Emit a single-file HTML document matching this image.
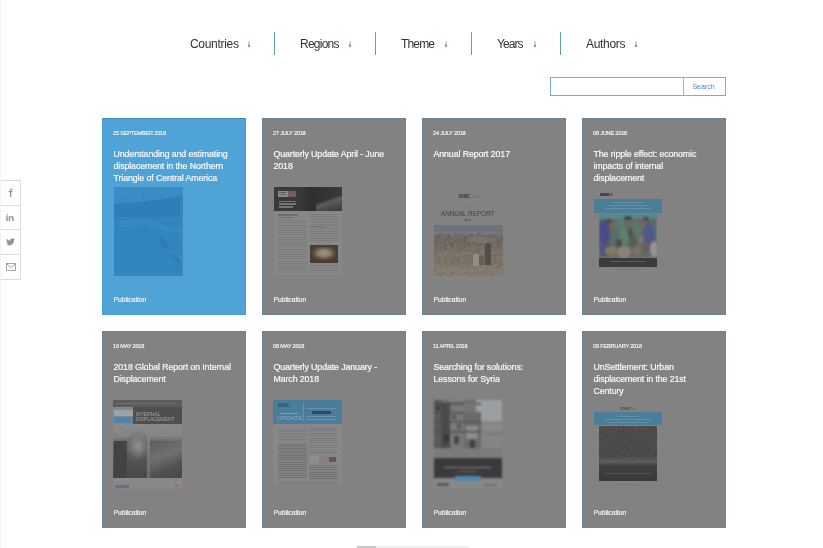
<!DOCTYPE html>
<html><head><meta charset="utf-8"><style>
*{margin:0;padding:0;box-sizing:border-box}
html,body{width:823px;height:548px;overflow:hidden;background:#fff}
body{position:relative;font-family:"Liberation Sans",sans-serif}
.nav{position:absolute;top:37px;font-size:12px;color:#333;line-height:14px;white-space:nowrap;will-change:transform}
.arr{position:absolute;top:41.2px;width:4px;height:7px}
.dv{position:absolute;top:32px;width:1px;height:23px;background:linear-gradient(180deg,#5aa9b4,#62a0b0 60%,#6a90a0)}
.search{position:absolute;left:550px;top:77px;width:176px;height:19px;border:1px solid #72b3c9}
.search .btn{position:absolute;left:132px;top:0;width:43px;height:17px;border-left:1px solid #8cc0d2;color:#3f8cc4;font-size:7px;line-height:17px;text-align:center;padding-right:3px;will-change:transform}
.social{position:absolute;left:0;top:180px;width:21px;height:100px;border:1px solid #dcdcdc;border-left:none}
.social>div{position:absolute;left:0;width:20px;border-bottom:1px solid #dcdcdc}
.social svg{position:absolute}
.card{position:absolute;width:144px;height:197px;background:#828282;box-shadow:inset 0 0 0 1px #67869a,inset 0 0 0 2px #7b8589;overflow:hidden;will-change:transform}
.card.blue{background:#4fa3d6;box-shadow:inset 0 1px 0 0 #3d8bbd,inset 0 0 0 1px #48a2cc}
.date{position:absolute;left:11px;top:11.5px;font-size:5.6px;color:#f4f4f4;letter-spacing:-0.2px;white-space:nowrap;-webkit-text-stroke:0.15px #f4f4f4}
.title{position:absolute;left:11.5px;top:29.5px;width:140px;white-space:nowrap;font-size:8.8px;line-height:12.3px;color:#fafafa;letter-spacing:-0.1px;-webkit-text-stroke:0.2px #fafafa}
.pub{position:absolute;left:11.5px;top:177.5px;font-size:6.8px;color:#f6f6f6;letter-spacing:-0.05px;-webkit-text-stroke:0.15px #f6f6f6}
.im{position:absolute}
.g{position:absolute;left:0;top:0;width:823px;height:548px;filter:blur(0.7px)}
</style></head><body>
<div class="nav" style="left:189.5px;letter-spacing:-0.3px">Countries</div><svg class="arr" style="left:246.5px" viewBox="0 0 4 7"><path d="M2 0.5V5" stroke="#4a8fc0" stroke-width="0.8"/><path d="M0.6 4.2L2 6.6L3.4 4.2Z" fill="#3b82b8"/></svg><div class="dv" style="left:274px"></div><div class="nav" style="left:299.5px;letter-spacing:-0.75px">Regions</div><svg class="arr" style="left:347.5px" viewBox="0 0 4 7"><path d="M2 0.5V5" stroke="#4a8fc0" stroke-width="0.8"/><path d="M0.6 4.2L2 6.6L3.4 4.2Z" fill="#3b82b8"/></svg><div class="dv" style="left:375px"></div><div class="nav" style="left:401px;letter-spacing:-0.85px">Theme</div><svg class="arr" style="left:444px" viewBox="0 0 4 7"><path d="M2 0.5V5" stroke="#4a8fc0" stroke-width="0.8"/><path d="M0.6 4.2L2 6.6L3.4 4.2Z" fill="#3b82b8"/></svg><div class="dv" style="left:471px"></div><div class="nav" style="left:497px;letter-spacing:-0.95px">Years</div><svg class="arr" style="left:532.5px" viewBox="0 0 4 7"><path d="M2 0.5V5" stroke="#4a8fc0" stroke-width="0.8"/><path d="M0.6 4.2L2 6.6L3.4 4.2Z" fill="#3b82b8"/></svg><div class="dv" style="left:560px"></div><div class="nav" style="left:585.5px;letter-spacing:-0.3px">Authors</div><svg class="arr" style="left:633.5px" viewBox="0 0 4 7"><path d="M2 0.5V5" stroke="#4a8fc0" stroke-width="0.8"/><path d="M0.6 4.2L2 6.6L3.4 4.2Z" fill="#3b82b8"/></svg>
<div class="search"><div class="btn">Search</div></div>
<div class="social"><div style="top:24px"></div><div style="top:48px"></div><div style="top:73px"></div></div><svg class="im" style="left:7px;top:188px" width="7" height="9" viewBox="0 0 7 9"><path d="M3 9V4.2H1.6V3H3V2C3 0.9 3.6 0.4 4.6 0.4H5.6V1.5H4.9C4.4 1.5 4.2 1.7 4.2 2.1V3H5.6L5.4 4.2H4.2V9Z" fill="#929292"/></svg><svg class="im" style="left:6.3px;top:213.6px" width="8.2" height="7.3" viewBox="0 0 9 8"><rect x="0.3" y="2.4" width="1.6" height="5.4" fill="#929292"/><circle cx="1.1" cy="0.9" r="0.9" fill="#929292"/><path d="M3 2.4H4.5V3.2C4.9 2.6 5.5 2.2 6.3 2.2C7.7 2.2 8.4 3 8.4 4.6V7.8H6.8V4.9C6.8 4.1 6.5 3.6 5.8 3.6C5.1 3.6 4.6 4.1 4.6 4.9V7.8H3Z" fill="#929292"/></svg><svg class="im" style="left:6px;top:238px" width="9" height="8" viewBox="0 0 24 20"><path d="M24 2.4c-.9.4-1.8.6-2.8.8 1-.6 1.8-1.6 2.2-2.7-1 .6-2 1-3.1 1.2C19.4.7 18.1.1 16.6.1c-2.7 0-4.9 2.2-4.9 4.9 0 .4 0 .8.1 1.1C7.7 5.9 4.1 4 1.7 1 1.2 1.7 1 2.6 1 3.5c0 1.7.9 3.2 2.2 4.1-.8 0-1.6-.2-2.2-.6v.1c0 2.4 1.7 4.4 3.9 4.8-.4.1-.8.2-1.3.2-.3 0-.6 0-.9-.1.6 2 2.4 3.4 4.6 3.4-1.7 1.3-3.8 2.1-6.1 2.1-.4 0-.8 0-1.2-.1 2.2 1.4 4.8 2.2 7.5 2.2 9.1 0 14-7.5 14-14v-.6c1-.7 1.8-1.6 2.5-2.6z" fill="#929292"/></svg><svg class="im" style="left:5.5px;top:262.5px" width="10" height="8" viewBox="0 0 10 8"><rect x="0.5" y="0.5" width="9" height="7" fill="none" stroke="#929292" stroke-width="0.8"/><path d="M0.7 0.8L5 4.6L9.3 0.8" fill="none" stroke="#929292" stroke-width="0.8"/></svg>
<div class="card blue" style="left:102px;top:118px"><div class="date">25 SEPTEMBER 2018</div><div class="title">Understanding and estimating<br>displacement in the Northern<br>Triangle of Central America</div><div class="pub">Publication</div></div><div class="card" style="left:262px;top:118px"><div class="date">27 JULY 2018</div><div class="title">Quarterly Update April - June<br>2018</div><div class="pub">Publication</div></div><div class="card" style="left:422px;top:118px"><div class="date">24 JULY 2018</div><div class="title">Annual Report 2017</div><div class="pub">Publication</div></div><div class="card" style="left:582px;top:118px"><div class="date">08 JUNE 2018</div><div class="title">The ripple effect: economic<br>impacts of internal<br>displacement</div><div class="pub">Publication</div></div><div class="card" style="left:102px;top:331px"><div class="date">16 MAY 2018</div><div class="title">2018 Global Report on Internal<br>Displacement</div><div class="pub">Publication</div></div><div class="card" style="left:262px;top:331px"><div class="date">08 MAY 2018</div><div class="title">Quarterly Update January -<br>March 2018</div><div class="pub">Publication</div></div><div class="card" style="left:422px;top:331px"><div class="date">11 APRIL 2018</div><div class="title">Searching for solutions:<br>Lessons for Syria</div><div class="pub">Publication</div></div><div class="card" style="left:582px;top:331px"><div class="date">09 FEBRUARY 2018</div><div class="title">UnSettlement: Urban<br>displacement in the 21st<br>Century</div><div class="pub">Publication</div></div>
<div class="g"><svg class="im" style="left:113.5px;top:187px" width="69" height="89" viewBox="0 0 69 89"><rect width="69" height="89" fill="#3184bc"/><path d="M0 0H69V8C55 11 35 15 0 17Z" fill="#3a8cc4"/><path d="M0 17C35 15 55 11 69 8V30H0Z" fill="#2e7fb7"/><path d="M4 34L30 31L48 37L60 41L69 40V46L50 44L30 38L5 41Z" fill="#3a8cc4" opacity=".6"/><path d="M46 48L69 76V82L44 54Z" fill="#2a78ae" opacity=".6"/><path d="M52 60L69 70V74L50 64Z" fill="#3d90c6" opacity=".5"/><rect x="10" y="9" width="3" height="8" fill="#2e7fb7" opacity=".5"/><rect x="28" y="8" width="3" height="8" fill="#2e7fb7" opacity=".5"/><rect x="66" y="0" width="3" height="89" fill="#3a8bc2" opacity=".6"/><rect x="0" y="86" width="69" height="3" fill="#3a8bc2" opacity=".6"/></svg></div><div class="g"><div class="im" style="left:273.5px;top:187px;width:68.5px;height:87.5px;background:#878787;"></div><div class="im" style="left:273.5px;top:187px;width:68.5px;height:24px;background:linear-gradient(90deg,#3a3a3a 0,#383838 40%,#2e2e2e 55%,#333 70%,#3a3a3a 100%);"></div><div class="im" style="left:316px;top:196px;width:26px;height:15px;background:linear-gradient(160deg,rgba(0,0,0,0) 0,rgba(0,0,0,0) 30%,rgba(140,140,140,.45) 45%,rgba(110,110,110,.35) 70%,rgba(60,60,60,.2) 100%);"></div><div class="im" style="left:278px;top:190.5px;width:10px;height:6.5px;background:#8c8c8c;"></div><div class="im" style="left:279px;top:192px;width:7px;height:1px;background:#5a5a5a;"></div><div class="im" style="left:279px;top:194px;width:7px;height:1px;background:#6a6a6a;"></div><div class="im" style="left:288px;top:190.5px;width:7.5px;height:6.5px;background:#7a5a5c;"></div><div class="im" style="left:278.5px;top:200.5px;width:17px;height:1.6px;background:#8a8a8a;opacity:.75"></div><div class="im" style="left:278.5px;top:203.3px;width:17px;height:1.6px;background:#8a8a8a;opacity:.75"></div><div class="im" style="left:278.5px;top:206.2px;width:14px;height:1.6px;background:#8a8a8a;opacity:.75"></div><div class="im" style="left:278px;top:214px;width:20px;height:1.5px;background:#6e6e6e;"></div><div class="im" style="left:278px;top:216.5px;width:16px;height:1.5px;background:#6e6e6e;"></div><div class="im" style="left:278px;top:219.5px;width:29px;height:52px;background:repeating-linear-gradient(180deg,#7c7c7c 0,#7c7c7c 1px,#878787 1px,#878787 2.4px);"></div><div class="im" style="left:309.6px;top:214px;width:28px;height:28px;background:repeating-linear-gradient(180deg,#7c7c7c 0,#7c7c7c 1px,#878787 1px,#878787 2.4px);"></div><div class="im" style="left:309.6px;top:226px;width:15px;height:1.3px;background:#6e6e6e;"></div><div class="im" style="left:309.5px;top:245px;width:28.5px;height:17.7px;background:radial-gradient(closest-side at 50% 45%,#9c9486 0,#8a8070 40%,#5c4d3c 75%,#4a3d30 100%);"></div><div class="im" style="left:309.5px;top:245px;width:28.5px;height:2px;background:#4a3f34;"></div><div class="im" style="left:309.6px;top:265px;width:28px;height:6px;background:repeating-linear-gradient(180deg,#7c7c7c 0,#7c7c7c 1px,#878787 1px,#878787 2.4px);"></div></div><div class="g"><div class="im" style="left:459px;top:194px;font:700 4.6px/5px 'Liberation Sans';color:#3a3a3a;letter-spacing:-0.1px">IDMC<span style="color:#6a6a6a;font-weight:400;font-size:3.5px"> iDFS</span></div><div class="im" style="left:463px;top:206px;width:10px;height:1px;background:#777;"></div><div class="im" style="left:441px;top:210px;font:400 6.4px/7px 'Liberation Sans';color:#454545;letter-spacing:-0.05px;white-space:nowrap">ANNUAL REPORT</div><div class="im" style="left:464px;top:218.5px;width:7px;height:2.5px;background:#6a6a6a;"></div><div class="im" style="left:433.5px;top:224.5px;width:69px;height:51px;background:linear-gradient(180deg,#6c727a 0,#6e737a 8px,#6c665f 10px,#655f58 16px,#6e665d 22px,#776d62 30px,#746b60 38px,#7e766c 44px,#7c746a 51px);"></div><div class="im" style="left:436px;top:236px;width:30px;height:8px;background:#6c665f;border-radius:50%;opacity:.5"></div><div class="im" style="left:466px;top:237px;width:30px;height:6px;background:#8a7f72;border-radius:50%;opacity:.4"></div><svg class="im" style="left:433.5px;top:232px;opacity:0.22;mix-blend-mode:soft-light" width="69" height="43.5"><filter id="g5" x="0" y="0" width="100%" height="100%"><feTurbulence type="fractalNoise" baseFrequency="0.3 0.4" numOctaves="3" seed="5"/><feColorMatrix values="0.33 0.33 0.33 0 0 0.33 0.33 0.33 0 0 0.33 0.33 0.33 0 0 0 0 0 0 1"/><feComponentTransfer><feFuncR type="linear" slope="3" intercept="-1"/><feFuncG type="linear" slope="3" intercept="-1"/><feFuncB type="linear" slope="3" intercept="-1"/></feComponentTransfer></filter><rect width="100%" height="100%" filter="url(#g5)"/></svg><div class="im" style="left:473px;top:253.5px;width:6px;height:12px;background:#9a948c;border-radius:3px 3px 1px 1px;opacity:.8"></div><div class="im" style="left:479px;top:255px;width:5px;height:10px;background:#5e544c;border-radius:3px 3px 0 0;opacity:.7"></div><div class="im" style="left:485px;top:243px;width:6px;height:22px;background:#47423e;border-radius:3px 3px 0 0;opacity:.75"></div></div><div class="g"><div class="im" style="left:600px;top:193px;width:9px;height:2.7px;background:#474747;"></div><div class="im" style="left:609px;top:193px;width:4px;height:2.7px;background:#7a6262;"></div><div class="im" style="left:594.2px;top:199px;width:67.4px;height:13.5px;background:#4a7e96;"></div><div class="im" style="left:612px;top:202px;width:32px;height:0.8px;background:#6390a6;"></div><div class="im" style="left:607px;top:205px;width:42px;height:0.8px;background:#6390a6;"></div><div class="im" style="left:605px;top:208px;width:46px;height:0.8px;background:#6390a6;"></div><div class="im" style="left:599px;top:258px;width:58px;height:8.5px;background:#3b3b3b;"></div><div class="im" style="left:610px;top:261px;width:36px;height:1px;background:#5a5a5a;"></div><div class="im" style="left:615px;top:269px;width:26px;height:1px;background:#777;"></div></div><div class="g" style="filter:blur(1.1px);clip-path:inset(212.5px 166px 290px 599px)"><svg class="im" style="left:599px;top:212.5px" width="58" height="45.5" viewBox="0 0 58 45.5"><rect width="58" height="45.5" fill="#5f6a6a"/><rect x="0" y="0" width="58" height="6" fill="#58868e"/><ellipse cx="5" cy="20" rx="6" ry="13" fill="#4a4c86"/><ellipse cx="6" cy="36" rx="6" ry="8" fill="#505478"/><ellipse cx="14" cy="13" rx="4" ry="6" fill="#6e6a54"/><ellipse cx="16" cy="26" rx="4" ry="7" fill="#5a6e6a"/><ellipse cx="22" cy="12" rx="5" ry="6" fill="#5a7c6a"/><ellipse cx="25" cy="24" rx="5" ry="8" fill="#5e806e"/><ellipse cx="31" cy="10" rx="4" ry="4" fill="#6a6a66"/><ellipse cx="32" cy="20" rx="3" ry="5" fill="#4e5450"/><ellipse cx="38" cy="16" rx="5" ry="7" fill="#5c786a"/><ellipse cx="44" cy="11" rx="4" ry="5" fill="#76665c"/><ellipse cx="50" cy="21" rx="6" ry="11" fill="#4e5a88"/><ellipse cx="55" cy="36" rx="4" ry="8" fill="#949490"/><ellipse cx="12" cy="38" rx="6" ry="5" fill="#86785f"/><ellipse cx="25" cy="39" rx="7" ry="6" fill="#8c8274"/><ellipse cx="38" cy="37" rx="5" ry="6" fill="#7a7062"/><ellipse cx="46" cy="34" rx="4" ry="5" fill="#6a605a"/><ellipse cx="20" cy="30" rx="3" ry="4" fill="#4e4a44"/><ellipse cx="34" cy="29" rx="4" ry="5" fill="#55604f"/><ellipse cx="10" cy="8" rx="3" ry="2" fill="#444a46"/><ellipse cx="29" cy="5" rx="4" ry="2" fill="#3e4844"/><ellipse cx="47" cy="6" rx="3" ry="2" fill="#4a4844"/><ellipse cx="42" cy="26" rx="3" ry="4" fill="#7a7870"/></svg></div><div class="g"><div class="im" style="left:113px;top:400px;width:69px;height:89px;background:#868686;"></div><div class="im" style="left:113px;top:400px;width:69px;height:6.6px;background:#5c5c5c;"></div><div class="im" style="left:116px;top:403px;width:60px;height:1px;background:#707070;"></div><div class="im" style="left:133px;top:406.6px;width:49px;height:17.4px;background:#4f4f4f;"></div><div class="im" style="left:135.5px;top:411.5px;font:400 5.2px/5.2px 'Liberation Sans';color:#a0a0a0;letter-spacing:-0.1px;white-space:nowrap">INTERNAL<br>DISPLACEMENT</div><div class="im" style="left:113.5px;top:410px;width:19px;height:6.3px;background:#98a4ad;"></div><div class="im" style="left:113.5px;top:416.6px;width:19.5px;height:6.8px;background:#4a86b0;"></div><div class="im" style="left:113px;top:424px;width:69px;height:54.4px;background:linear-gradient(180deg,#888 0,#828282 12px,#666 18px,#535353 32px,#464646 54px);"></div><div class="im" style="left:113.5px;top:441px;width:13px;height:37px;background:#404040;"></div><div class="im" style="left:124px;top:430px;width:28px;height:36px;background:radial-gradient(closest-side at 50% 45%,rgba(150,150,150,.9) 0,rgba(125,125,125,.7) 45%,rgba(100,100,100,.3) 80%,rgba(80,80,80,0) 100%);"></div><div class="im" style="left:150px;top:441px;width:32px;height:37px;background:linear-gradient(160deg,#5a5a5a 0,#6e6e6e 40%,#505050 70%,#444 100%);"></div><div class="im" style="left:147px;top:436px;width:2.5px;height:42px;background:#9a9a9a;opacity:.45"></div><svg class="im" style="left:113px;top:424px;opacity:0.1;mix-blend-mode:soft-light" width="69" height="54"><filter id="g9" x="0" y="0" width="100%" height="100%"><feTurbulence type="fractalNoise" baseFrequency="0.45" numOctaves="3" seed="9"/><feColorMatrix values="0.33 0.33 0.33 0 0 0.33 0.33 0.33 0 0 0.33 0.33 0.33 0 0 0 0 0 0 1"/><feComponentTransfer><feFuncR type="linear" slope="3" intercept="-1"/><feFuncG type="linear" slope="3" intercept="-1"/><feFuncB type="linear" slope="3" intercept="-1"/></feComponentTransfer></filter><rect width="100%" height="100%" filter="url(#g9)"/></svg><div class="im" style="left:113px;top:478.4px;width:69px;height:10.6px;background:#888888;"></div><div class="im" style="left:115px;top:484.5px;width:14px;height:3.5px;background:#5d7389;"></div><div class="im" style="left:174.8px;top:483.7px;width:3.5px;height:3.3px;background:#9a6e50;"></div></div><div class="g"><div class="im" style="left:273.3px;top:400.2px;width:68.7px;height:86px;background:#878787;"></div><div class="im" style="left:273.3px;top:400.2px;width:68.7px;height:24px;background:#4a7d9c;"></div><div class="im" style="left:278px;top:403.2px;font:700 5px/5px 'Liberation Sans';color:#2f4f66;letter-spacing:-0.2px">IDMC</div><div class="im" style="left:280px;top:412.5px;width:18px;height:0.8px;background:#7aa0b8;"></div><div class="im" style="left:277.2px;top:414.6px;font:400 6.2px/6.2px 'Liberation Sans';color:#8ab0c8;letter-spacing:0.1px">UPDATE</div><div class="im" style="left:302.6px;top:402px;width:0.7px;height:20px;background:#6a92ac;"></div><div class="im" style="left:306px;top:408px;width:30px;height:0.8px;background:#6a92ac;"></div><div class="im" style="left:312.2px;top:410.7px;width:19.3px;height:3.5px;background:#2f4a60;"></div><div class="im" style="left:306px;top:416px;width:30px;height:0.8px;background:#6a92ac;"></div><div class="im" style="left:306px;top:419px;width:30px;height:0.8px;background:#6a92ac;"></div><div class="im" style="left:278px;top:429px;width:10px;height:4px;background:#8a7c78;"></div><div class="im" style="left:278px;top:429px;width:29px;height:11px;background:repeating-linear-gradient(180deg,#7c7c7c 0,#7c7c7c 1px,#878787 1px,#878787 2.4px);"></div><div class="im" style="left:277.5px;top:443.6px;width:29.2px;height:34.7px;background:repeating-linear-gradient(180deg,#747474 0,#747474 1px,#828282 1px,#828282 2.2px);"></div><div class="im" style="left:309.4px;top:428px;width:27.4px;height:24.8px;background:repeating-linear-gradient(180deg,#7a7a7a 0,#7a7a7a 1px,#878787 1px,#878787 2.4px);"></div><div class="im" style="left:310.3px;top:456.4px;width:9px;height:6.4px;background:#8e8e8e;"></div><div class="im" style="left:319.3px;top:456.4px;width:9.3px;height:6.4px;background:#8c7e7e;"></div><div class="im" style="left:329px;top:456.9px;width:6.9px;height:5.5px;background:#5a5a5a;"></div><div class="im" style="left:309px;top:464.6px;width:27.8px;height:15.4px;background:repeating-linear-gradient(180deg,#747474 0,#747474 1px,#828282 1px,#828282 2.2px);"></div><div class="im" style="left:277.5px;top:482px;width:59px;height:3.6px;background:repeating-linear-gradient(180deg,#7a7a7a 0,#7a7a7a 1px,#878787 1px,#878787 1.8px);"></div></div><div class="g" style="filter:blur(0.9px)"><div class="im" style="left:433.5px;top:400px;width:68.5px;height:89px;background:#878787;"></div><svg class="im" style="left:433.5px;top:400px" width="68.5" height="48" viewBox="0 0 68.5 48"><rect width="68.5" height="48" fill="#6c6c6c"/><rect x="42" y="0" width="26.5" height="22" fill="#9b9fa2"/><rect x="47" y="21" width="21.5" height="27" fill="#858585"/><rect x="50" y="26" width="18" height="2" fill="#909090"/><rect x="50" y="33" width="18" height="2" fill="#777"/><rect x="0" y="0" width="8" height="48" fill="#5a5a5a"/><rect x="7" y="4" width="9" height="44" fill="#4a4a4a"/><rect x="16" y="0" width="14" height="48" fill="#787878"/><rect x="30" y="12" width="17" height="36" fill="#6a6a6a"/><rect x="32" y="26" width="12" height="13" fill="#8c8c8c"/><rect x="0" y="3" width="47" height="1.5" fill="#454545"/><rect x="0" y="12" width="30" height="1.5" fill="#4e4e4e"/><rect x="0" y="21" width="47" height="1.5" fill="#505050"/><rect x="0" y="31" width="47" height="1.5" fill="#4e4e4e"/><rect x="2" y="6" width="4" height="4" fill="#3a3a3a"/><rect x="18" y="15" width="4" height="4" fill="#555"/><rect x="23" y="24" width="4" height="5" fill="#5a5a5a"/><rect x="10" y="34" width="5" height="8" fill="#383838"/><rect x="20" y="36" width="5" height="8" fill="#4a4a4a"/><rect x="36" y="40" width="5" height="8" fill="#3e3e3e"/><rect x="30" y="3" width="12" height="9" fill="#757575"/></svg><div class="im" style="left:433.5px;top:448px;width:68.3px;height:10.3px;background:#7b7b7b;"></div><div class="im" style="left:433.5px;top:458.3px;width:68.3px;height:20.2px;background:#3a3a3a;"></div><div class="im" style="left:444px;top:466.5px;width:47px;height:1.3px;background:#858585;"></div><div class="im" style="left:458px;top:470.5px;width:19px;height:1px;background:#7a6a6a;"></div><div class="im" style="left:455.4px;top:475.8px;width:25.4px;height:4.9px;background:#4a8ab2;"></div><div class="im" style="left:433.5px;top:480.7px;width:68.3px;height:8.3px;background:#888888;"></div><div class="im" style="left:437px;top:483px;width:12px;height:3.3px;background:#4e4e4e;opacity:.8"></div><div class="im" style="left:484px;top:484px;width:13px;height:1.5px;background:#6e6e6e;"></div></div><div class="g"><div class="im" style="left:620.5px;top:405.8px;font:700 4.4px/5px 'Liberation Sans';color:#484848;letter-spacing:0px">IDMC<span style="color:#5a5a5a;font-weight:400;font-size:3.5px"> iD</span></div><div class="im" style="left:594px;top:412.3px;width:68.2px;height:13.2px;background:#4a7f9a;"></div><div class="im" style="left:617px;top:415.5px;width:22px;height:0.8px;background:#6390a6;"></div><div class="im" style="left:604px;top:418.5px;width:48px;height:0.8px;background:#6390a6;"></div><div class="im" style="left:608px;top:421.5px;width:40px;height:0.8px;background:#6390a6;"></div><div class="im" style="left:599px;top:425.5px;width:58.3px;height:55px;background:linear-gradient(180deg,#524842 0,#4a4440 5px,#474747 10px,#454545 30px,#585858 36px,#404040 40px,#393939 55px);"></div><svg class="im" style="left:599px;top:426px;opacity:0.18;mix-blend-mode:soft-light" width="58" height="37"><filter id="g8" x="0" y="0" width="100%" height="100%"><feTurbulence type="fractalNoise" baseFrequency="0.6" numOctaves="3" seed="8"/><feColorMatrix values="0.33 0.33 0.33 0 0 0.33 0.33 0.33 0 0 0.33 0.33 0.33 0 0 0 0 0 0 1"/><feComponentTransfer><feFuncR type="linear" slope="3" intercept="-1"/><feFuncG type="linear" slope="3" intercept="-1"/><feFuncB type="linear" slope="3" intercept="-1"/></feComponentTransfer></filter><rect width="100%" height="100%" filter="url(#g8)"/></svg><div class="im" style="left:605px;top:473px;width:46px;height:1px;background:#555;"></div><div class="im" style="left:616px;top:483.5px;width:23px;height:1px;background:#777;"></div></div>
<div class="im" style="left:0;top:0;width:1px;height:548px;background:#f3f3f3"></div>
<div class="im" style="left:357px;top:546px;width:112px;height:2px;background:#eeeeee"></div>
<div class="im" style="left:0;top:0;width:1px;height:548px;background:#f3f3f3"></div>
<div class="im" style="left:357px;top:546px;width:19px;height:2px;background:#c8c8c8"></div>
</body></html>
